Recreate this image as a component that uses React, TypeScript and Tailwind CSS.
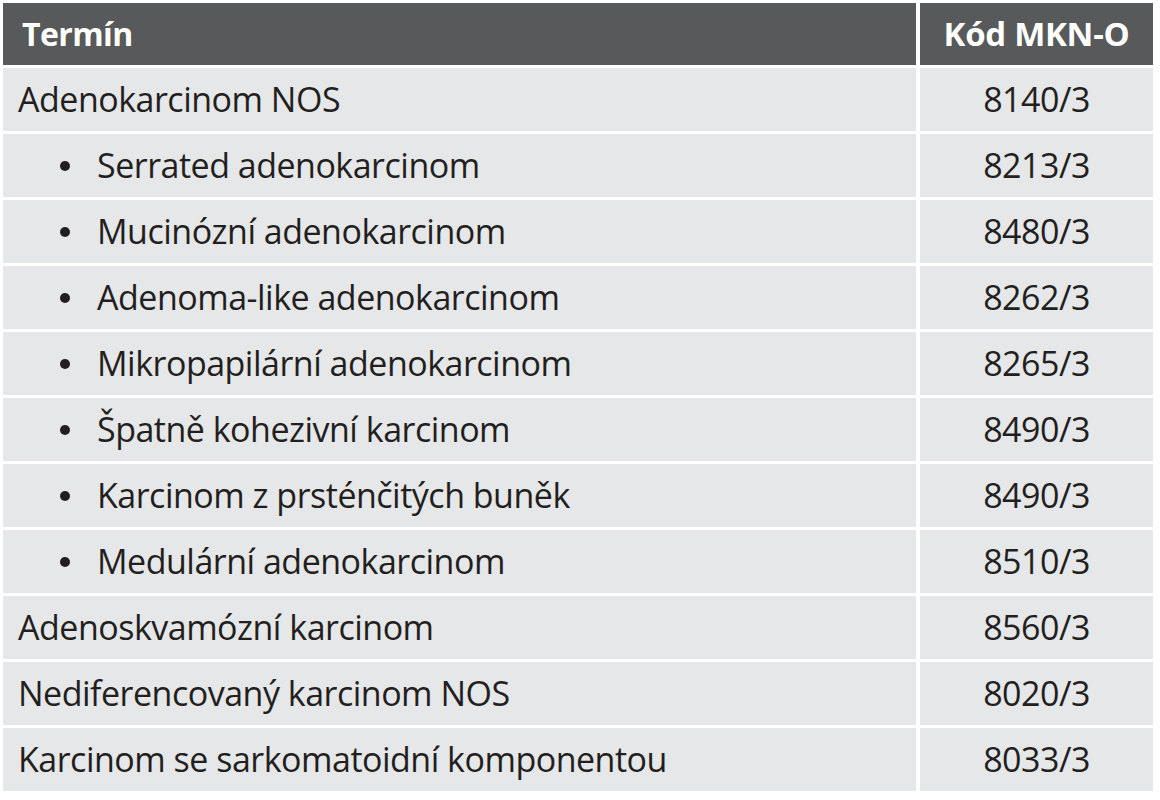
const rows: { term: string; code: string; sub?: boolean }[] = [
  { term: "Adenokarcinom NOS", code: "8140/3" },
  { term: "Serrated adenokarcinom", code: "8213/3", sub: true },
  { term: "Mucinózní adenokarcinom", code: "8480/3", sub: true },
  { term: "Adenoma-like adenokarcinom", code: "8262/3", sub: true },
  { term: "Mikropapilární adenokarcinom", code: "8265/3", sub: true },
  { term: "Špatně kohezivní karcinom", code: "8490/3", sub: true },
  { term: "Karcinom z prsténčitých buněk", code: "8490/3", sub: true },
  { term: "Medulární adenokarcinom", code: "8510/3", sub: true },
  { term: "Adenoskvamózní karcinom", code: "8560/3" },
  { term: "Nediferencovaný karcinom NOS", code: "8020/3" },
  { term: "Karcinom se sarkomatoidní komponentou", code: "8033/3" },
];

export default function App() {
  return (
    <div className="w-[1160px] h-[800px] bg-white pl-[3px] pt-[3px] font-['Open_Sans',sans-serif] text-[#231f20]">
      <div className="grid grid-cols-[913px_233px] gap-x-[4px] gap-y-[3px]">
        {/* Header */}
        <div className="h-[62px] bg-[#58595b] flex items-center pl-[19px] text-white font-bold text-[32px] tracking-[-0.6px]">
          Termín
        </div>
        <div className="h-[62px] bg-[#58595b] flex items-center justify-center text-white font-bold text-[33px] tracking-[-0.3px]">
          Kód MKN-O
        </div>

        {rows.map((row, i) => (
          <>
            <div
              key={`t${i}`}
              className={`h-[63px] bg-[#e6e7e8] flex items-center text-[34px] tracking-[-0.5px] ${row.sub ? "pl-[57px]" : "pl-[15px]"}`}
            >
              {row.sub && <span className="w-[10px] h-[10px] rounded-full bg-[#231f20] mr-[27px] shrink-0" />}
              {row.term}
            </div>
            <div key={`c${i}`} className="h-[63px] bg-[#e6e7e8] flex items-center justify-center text-[34px] tracking-[-0.5px]">
              {row.code}
            </div>
          </>
        ))}
      </div>
    </div>
  );
}
